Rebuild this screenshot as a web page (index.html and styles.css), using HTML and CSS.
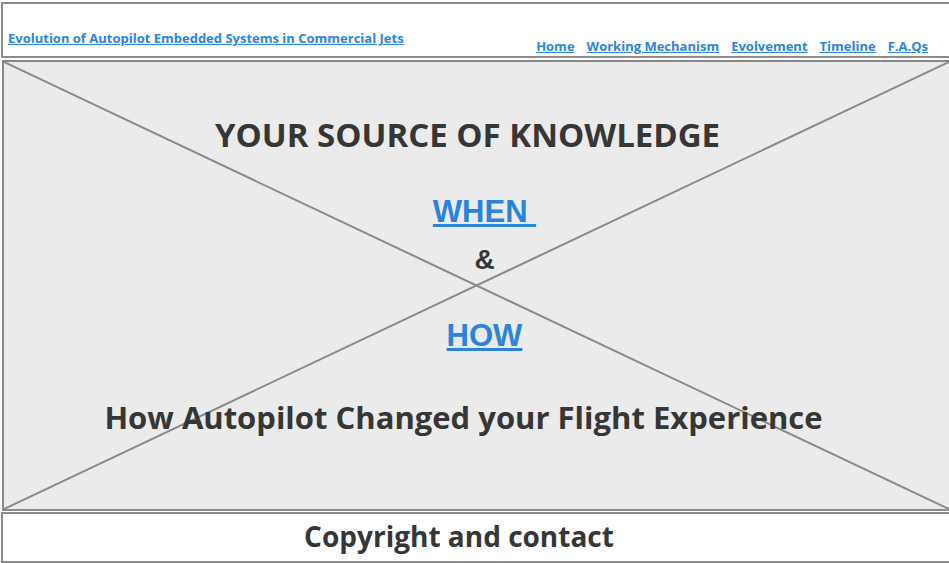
FILE: index.html
```html
<!DOCTYPE html>
<html>
<head>
<meta charset="utf-8">
<title>Evolution of Autopilot Embedded Systems in Commercial Jets</title>
<link rel="stylesheet" href="styles.css">
</head>
<body>
<div class="page">
  <header class="header">
    <a class="brand" href="#">Evolution of Autopilot Embedded Systems in Commercial Jets</a>
    <nav class="nav">
      <a href="#">Home</a>
      <a href="#">Working Mechanism</a>
      <a href="#">Evolvement</a>
      <a href="#">Timeline</a>
      <a href="#">F.A.Qs</a>
    </nav>
  </header>
  <main class="hero">
    <svg class="cross" viewBox="0 0 100 100" preserveAspectRatio="none" aria-hidden="true">
      <line x1="0" y1="0" x2="100" y2="100" vector-effect="non-scaling-stroke"/>
      <line x1="0" y1="100" x2="100" y2="0" vector-effect="non-scaling-stroke"/>
    </svg>
    <h1 class="title">YOUR SOURCE OF KNOWLEDGE</h1>
    <a class="big-link when" href="#">WHEN&nbsp;</a>
    <div class="amp">&amp;</div>
    <a class="big-link how" href="#">HOW</a>
    <h2 class="subtitle">How Autopilot Changed your Flight Experience</h2>
  </main>
  <footer class="footer">Copyright and contact</footer>
</div>
</body>
</html>
```
FILE: styles.css
```css
html, body {
  margin: 0;
  padding: 0;
  background: #ffffff;
  overflow: hidden;
}
.page {
  width: 948px;
  padding: 2px 0 0 1px;
  font-family: "Open Sans", "Liberation Sans", sans-serif;
}
.header {
  height: 49px;
  border: 2px solid #8a8a8a;
  border-right: none;
  display: flex;
  align-items: flex-end;
  justify-content: space-between;
  padding: 0 21px 3px 5px;
  background: #fff;
}
.header a {
  color: #2a84dc;
  font-weight: 700;
  font-size: 13px;
  text-decoration: underline;
}
.brand {
  margin-bottom: 6px;
}
.nav {
  display: flex;
  gap: 12px;
  margin-bottom: -2px;
}
.hero {
  position: relative;
  margin: 2px 0 0 1px;
  height: 447px;
  border: 2px solid #8a8a8a;
  border-right: none;
  background: #ebebeb;
  display: flex;
  flex-direction: column;
  align-items: center;
  color: #363636;
}
.cross {
  position: absolute;
  left: 0;
  top: 0;
  width: 100%;
  height: 100%;
}
.cross line {
  stroke: #888;
  stroke-width: 2;
}
.title, .subtitle, .amp, .big-link {
  position: relative;
}
.title {
  margin: 53px 0 0 -18px;
  font-size: 33px;
  font-weight: 700;
  line-height: 40px;
}
.big-link {
  font-family: "Liberation Sans", Arial, sans-serif;
  font-weight: 700;
  font-size: 31px;
  color: #2a84dc;
  line-height: 34px;
}
.when {
  margin-top: 40px;
  margin-left: 16px;
}
.amp {
  font-family: "Liberation Sans", Arial, sans-serif;
  font-weight: 700;
  font-size: 28px;
  line-height: 34px;
  margin-top: 14px;
  margin-left: 16px;
}
.how {
  margin-top: 42px;
  margin-left: 16px;
}
.subtitle {
  margin: 44px 0 0 -26px;
  font-size: 31px;
  font-weight: 700;
  line-height: 40px;
}
.footer {
  margin-top: 1px;
  height: 51px;
  border: 2px solid #8a8a8a;
  border-right: none;
  display: flex;
  align-items: center;
  justify-content: center;
  padding-right: 34px;
  padding-bottom: 4px;
  box-sizing: border-box;
  font-size: 28px;
  font-weight: 700;
  color: #363636;
}
```
